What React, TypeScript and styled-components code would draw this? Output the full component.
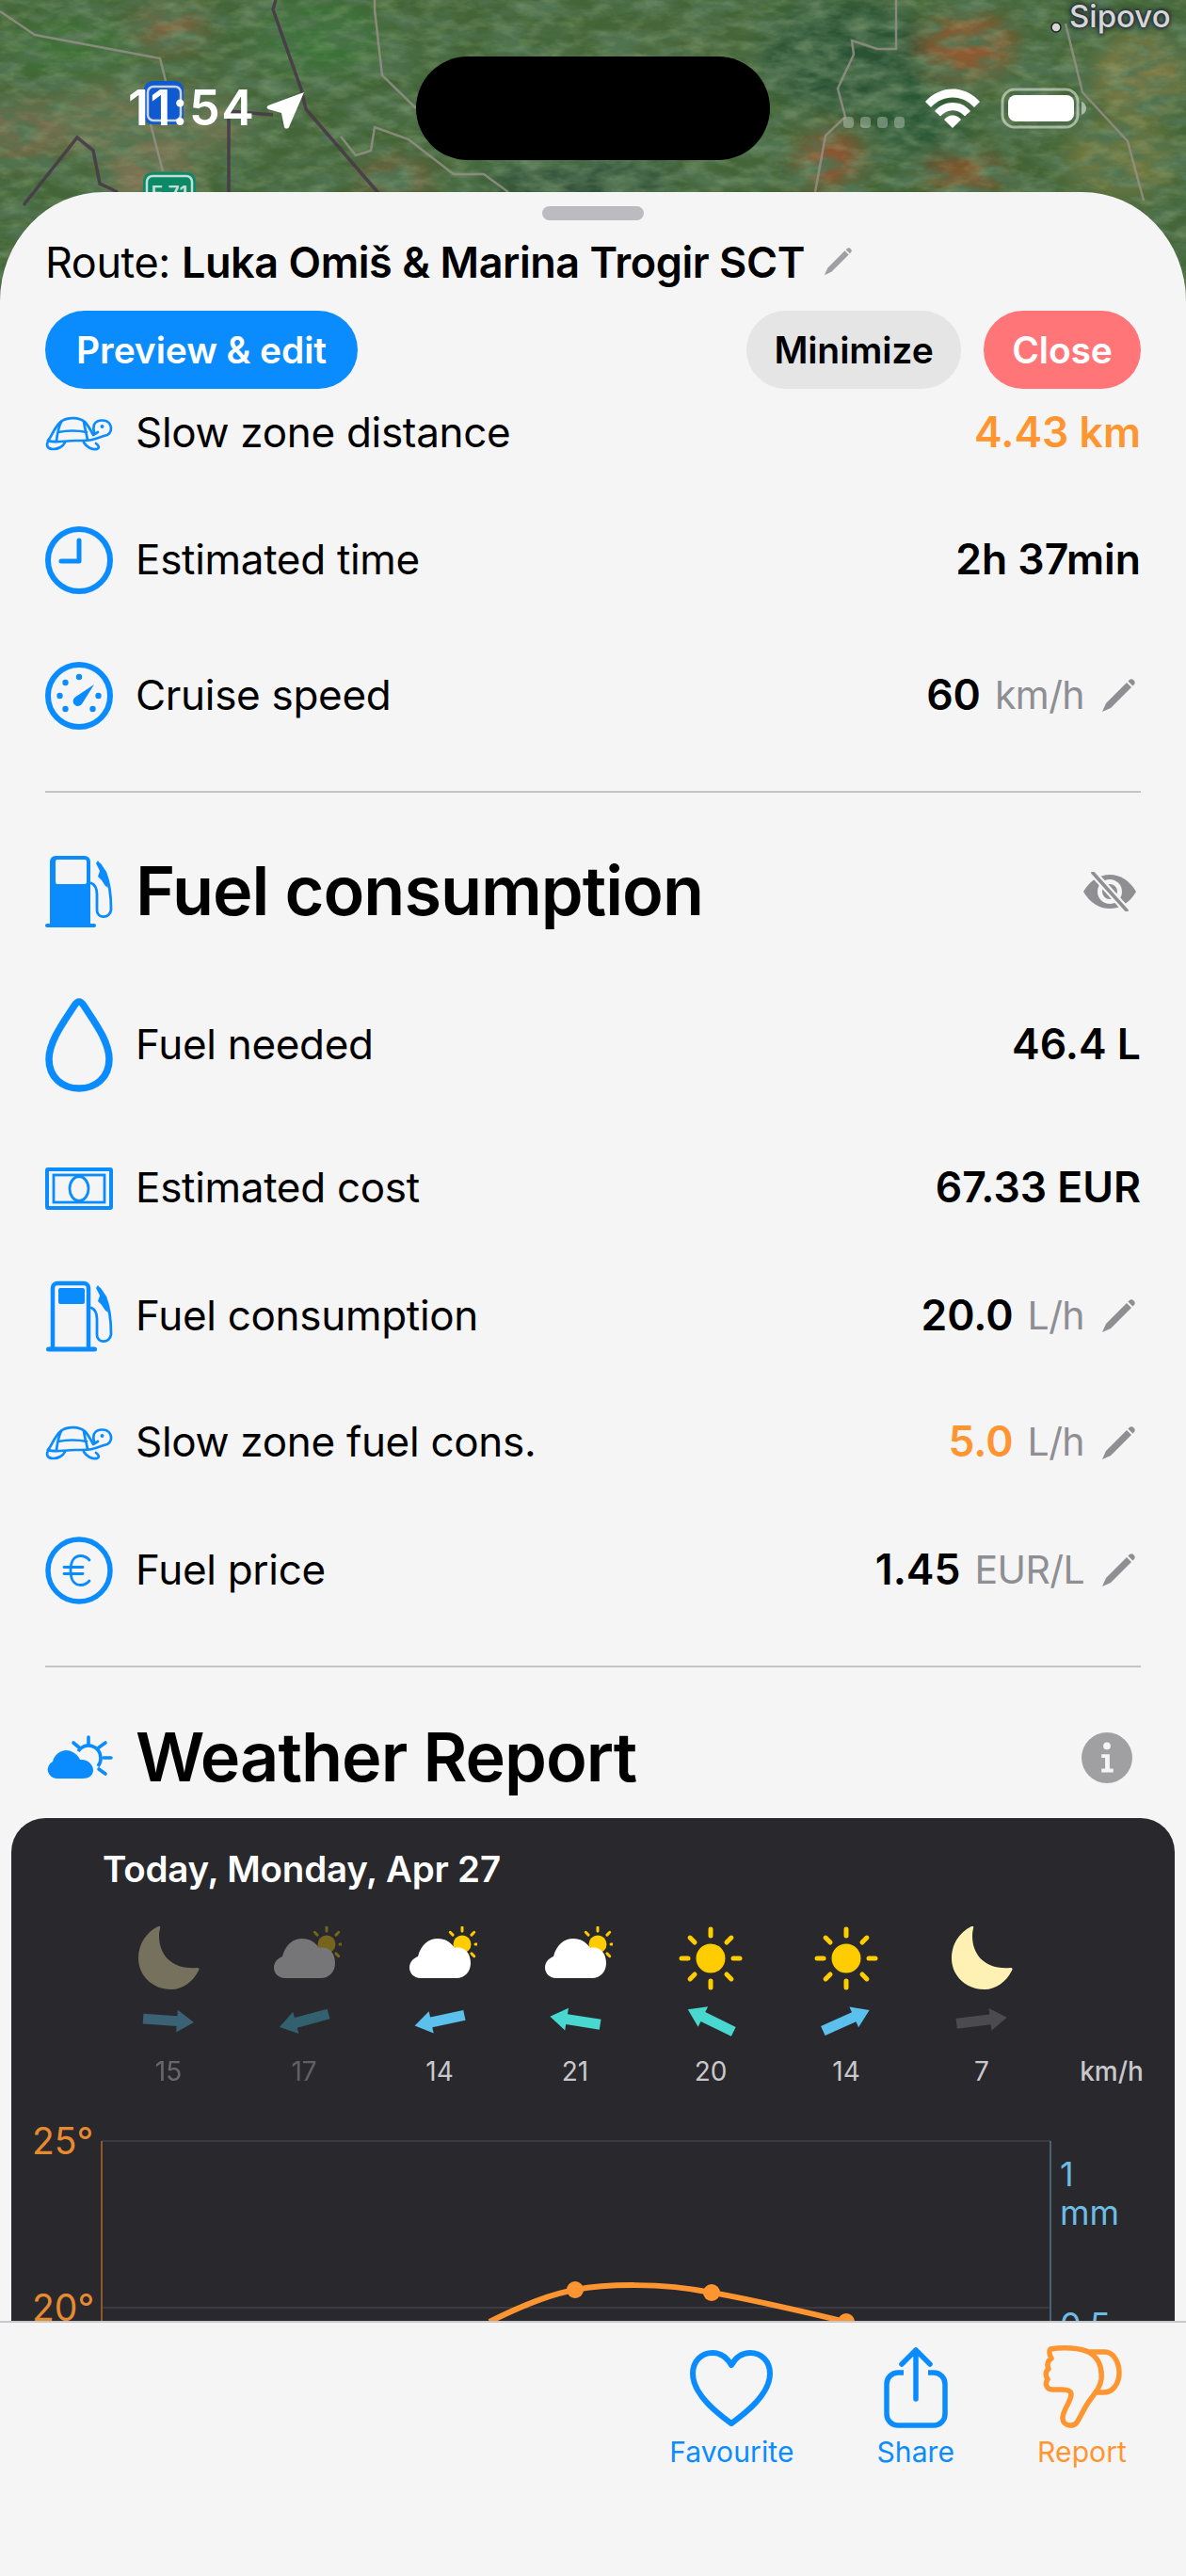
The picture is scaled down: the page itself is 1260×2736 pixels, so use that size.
import React from 'react';
import styled, { createGlobalStyle } from 'styled-components';

const BLUE = '#0a8cff';
const ORANGE = '#ff9530';
const GRAY = '#8e8e93';

const GlobalStyle = createGlobalStyle`
  html, body { margin: 0; padding: 0; background: #f5f5f5; }
  body { font-family: Inter, "Liberation Sans", sans-serif; color: #000; }
  * { box-sizing: border-box; }
`;

// ── Page shell ─────────────────────────────────────────────────────────────

const Screen = styled.div`
  position: relative;
  width: 1260px;
  height: 2736px;
  overflow: hidden;
  padding-top: 204px;
  display: flex;
  flex-direction: column;
`;

const MapLayer = styled.svg`
  position: absolute;
  left: 0;
  top: 0;
`;

const Island = styled.div`
  position: absolute;
  left: 442px;
  top: 60px;
  width: 376px;
  height: 110px;
  border-radius: 55px;
  background: #000;
`;

const StatusTime = styled.div`
  position: absolute;
  left: 136px;
  top: 85px;
  font-size: 52px;
  line-height: 60px;
  font-weight: 600;
  color: #fff;
  letter-spacing: 1.5px;
`;

const PlaceLabel = styled.div`
  position: absolute;
  left: 1136px;
  top: -2px;
  font-size: 33px;
  line-height: 38px;
  font-weight: 500;
  color: #d6d6d6;
  text-shadow: 0 0 3px #27303a, 0 0 3px #27303a, 0 0 5px #27303a, 0 0 6px #27303a;
`;

const Sheet = styled.div`
  position: relative;
  flex: 1;
  min-height: 0;
  display: flex;
  flex-direction: column;
  background: #f5f5f5;
  border-radius: 110px 110px 0 0 / 116px 116px 0 0;
`;

const Grabber = styled.div`
  position: absolute;
  left: 576px;
  top: 15px;
  width: 108px;
  height: 15px;
  border-radius: 8px;
  background: #bcbcc0;
`;

// ── Header ─────────────────────────────────────────────────────────────────

const Header = styled.div`
  height: 226px;
  flex: none;
  padding: 48px 48px 0;
`;

const TitleLine = styled.div`
  display: flex;
  align-items: center;
  gap: 20px;
  height: 52px;
  font-size: 45px;
  letter-spacing: -0.44px;
  white-space: nowrap;

  b { font-weight: 600; }
`;

const ButtonRow = styled.div`
  display: flex;
  align-items: center;
  gap: 24px;
  margin-top: 26px;
`;

const Pill = styled.div<{ $bg: string; $fg: string; $w: number }>`
  width: ${({ $w }) => $w}px;
  height: 83px;
  border-radius: 42px;
  display: flex;
  align-items: center;
  justify-content: center;
  background: ${({ $bg }) => $bg};
  color: ${({ $fg }) => $fg};
  font-size: 39px;
  font-weight: 600;
  letter-spacing: -0.1px;
  white-space: nowrap;
`;

const Spacer = styled.div`
  flex: 1;
`;

// ── Scrolled content ───────────────────────────────────────────────────────

const Scroll = styled.div`
  flex: 1;
  min-height: 0;
  overflow: hidden;
`;

const Section = styled.div`
  padding: 0 48px;
`;

const Row = styled.div<{ $h: number; $mt: number }>`
  height: ${({ $h }) => $h}px;
  margin-top: ${({ $mt }) => $mt}px;
  display: flex;
  align-items: center;
`;

const IconSlot = styled.div`
  width: 72px;
  flex: none;
  display: flex;
  align-items: center;
  justify-content: center;
  margin-right: 24px;
`;

const Label = styled.div`
  flex: 1;
  margin-bottom: 3px;
  font-size: 44px;
  letter-spacing: -0.3px;
  white-space: nowrap;
`;

const Value = styled.div<{ $warn?: boolean }>`
  margin-bottom: 3px;
  font-size: 44.5px;
  font-weight: 600;
  color: ${({ $warn }) => ($warn ? ORANGE : '#000')};
  white-space: nowrap;
`;

const Unit = styled.div`
  margin-left: 15px;
  margin-bottom: 3px;
  font-size: 41px;
  letter-spacing: -0.6px;
  color: ${GRAY};
  white-space: nowrap;
`;

const EditSlot = styled.div`
  margin-left: 18px;
  margin-right: 6px;
  display: flex;
`;

const Divider = styled.div<{ $mt: number }>`
  height: 2px;
  margin-top: ${({ $mt }) => $mt}px;
  background: #c4c4c6;
`;

const HeadingRow = styled.div<{ $h: number; $mt: number }>`
  height: ${({ $h }) => $h}px;
  margin-top: ${({ $mt }) => $mt}px;
  display: flex;
  align-items: center;
`;

const Heading = styled.div`
  flex: 1;
  margin-bottom: 3px;
  font-size: 72px;
  font-weight: 600;
  letter-spacing: -1px;
  white-space: nowrap;
`;

const HeadingTool = styled.div<{ $right: number }>`
  margin-right: ${({ $right }) => $right}px;
  display: flex;
`;

// ── Weather card ───────────────────────────────────────────────────────────

const WeatherCard = styled.div`
  margin: 25px 12px 0;
  height: 700px;
  background: #28282d;
  border-radius: 36px;
  padding-top: 30px;
`;

const DateLine = styled.div`
  padding-left: 97px;
  font-size: 38.5px;
  line-height: 48px;
  font-weight: 600;
  letter-spacing: -0.2px;
  color: #fff;
`;

const Forecast = styled.div`
  display: grid;
  grid-template-columns: repeat(7, 144px) 132px;
  padding-left: 95px;
  margin-top: 37px;
`;

const HourCell = styled.div`
  display: flex;
  flex-direction: column;
  align-items: center;
`;

const HourIcon = styled.div<{ $dim: number }>`
  height: 68px;
  display: flex;
  opacity: ${({ $dim }) => $dim};
`;

const HourArrow = styled.div`
  height: 48px;
  margin-top: 8px;
  display: flex;
`;

const Speed = styled.div<{ $dim: number }>`
  margin-top: 12px;
  height: 36px;
  font-size: 28px;
  line-height: 36px;
  color: #c8c8cc;
  opacity: ${({ $dim }) => $dim};
`;

const SpeedUnit = styled(Speed)`
  grid-column: 8;
  align-self: end;
  justify-self: center;
  font-weight: 500;
`;

const ChartSvg = styled.svg`
  display: block;
  margin-top: 22px;
`;

// ── Footer ─────────────────────────────────────────────────────────────────

const Footer = styled.div`
  flex: none;
  height: 271px;
  background: #f5f5f5;
  border-top: 2px solid #c8c8ca;
  display: flex;
  justify-content: flex-end;
  gap: 88px;
  padding: 24px 63px 0 0;
`;

const FooterAction = styled.div<{ $color: string }>`
  display: flex;
  flex-direction: column;
  align-items: center;
  color: ${({ $color }) => $color};
  font-size: 30px;
  line-height: 38px;
  letter-spacing: 0.1px;
`;

const ActionIcon = styled.div`
  height: 88px;
  display: flex;
  align-items: flex-end;
  margin-bottom: 6px;
`;

// ── Icons ──────────────────────────────────────────────────────────────────

const Pencil = ({ size = 36, color = GRAY }: { size?: number; color?: string }) => (
  <svg width={size} height={size} viewBox="0 0 36 36">
    <path d="M27 4 L32 9 L10 31 L1 35 L5 26 Z" fill={color} />
    <path d="M29.500 1.500 a2.600 2.600 0 0 1 5 5 L33.400 7.600 L28.400 2.600 Z" fill={color} />
  </svg>
);

const ClockIcon = () => (
  <svg width="72" height="72" viewBox="0 0 72 72" fill="none" stroke={BLUE} strokeWidth="6" strokeLinecap="round" strokeLinejoin="round">
    <circle cx="36" cy="36" r="33" />
    <path d="M36 15 V37 H17" strokeWidth="5" />
  </svg>
);

const GaugeIcon = () => (
  <svg width="72" height="72" viewBox="0 0 72 72" fill="none">
    <circle cx="36" cy="36" r="33" stroke={BLUE} strokeWidth="6" />
    {[[36, 16], [21.5, 22], [15.5, 36], [21.5, 50], [56.5, 36], [50.5, 50]].map(([x, y]) => (
      <circle key={`${x}-${y}`} cx={x} cy={y} r="3.2" fill={BLUE} />
    ))}
    <path d="M52 24 L39.500 44 a5.200 5.200 0 1 1 -7.800 -6.400 Z" fill={BLUE} />
  </svg>
);

const PumpIcon = ({ solid }: { solid?: boolean }) => (
  <svg width="72" height="76" viewBox="0 0 72 76" fill="none">
    {solid ? (
      <>
        <path
          fillRule="evenodd"
          d="M5 73 V6 a6 6 0 0 1 6 -6 H42 a6 6 0 0 1 6 6 V73 Z M13 4 a2 2 0 0 0 -2 2 V28 a2 2 0 0 0 2 2 H42 a2 2 0 0 0 2 -2 V6 a2 2 0 0 0 -2 -2 Z"
          fill={BLUE}
        />
        <rect x="0" y="72" width="54" height="4" rx="2" fill={BLUE} />
      </>
    ) : (
      <>
        <path d="M8 73 V8 a5 5 0 0 1 5 -5 H41 a5 5 0 0 1 5 5 V73" stroke={BLUE} strokeWidth="4.500" />
        <rect x="1" y="70.500" width="54" height="5" rx="2.500" fill={BLUE} />
        <rect x="14" y="8" width="28" height="17" rx="2" fill={BLUE} />
      </>
    )}
    <path d="M49 29 C54 31 55 35 55 41 V58 C55 67 69 67 70 57 C70 45 68 28 64 18 L58 9" stroke={BLUE} strokeWidth="2.800" strokeLinecap="round" />
    <path d="M56 5 L61 12 C64 18 66 25 67 34 L64 32 L60 26 L56 22 L58 16 L54 8 Z" fill={BLUE} />
  </svg>
);

const DropIcon = () => (
  <svg width="72" height="102" viewBox="0 0 72 102" fill="none">
    <path
      d="M36 5 C38 5 39 6 41 9 C52 26 68 47 68 66 C68 85 54 97 36 97 C18 97 4 85 4 66 C4 47 20 26 31 9 C33 6 34 5 36 5 Z"
      stroke={BLUE}
      strokeWidth="7.500"
      strokeLinejoin="round"
    />
  </svg>
);

const MoneyIcon = () => (
  <svg width="72" height="45" viewBox="0 0 72 45" fill="none">
    <rect x="2" y="2" width="68" height="41" rx="1" stroke={BLUE} strokeWidth="4" />
    <rect x="9" y="8" width="54" height="29" stroke={BLUE} strokeWidth="2.800" fill="none" />
    <ellipse cx="36" cy="22.500" rx="10" ry="13" stroke={BLUE} strokeWidth="2.800" />
  </svg>
);

const TurtleIcon = () => (
  <svg width="72" height="37" viewBox="0 0 72 37" fill="none" stroke={BLUE} strokeWidth="2.700" strokeLinecap="round" strokeLinejoin="round">
    <path d="M3 26 C7 22 10 10 18 5 C24 1 36 1 42 6 C46 10 48 14 51 20 L56 17" />
    <path d="M3 26 C10 29 20 26 32 26 C40 26 46 26 50 25 C58 23 61 21 66 20 C70 18 71 13 69 9 C66 3 55 3 52 9 C51 12 51 14 52 17" />
    <path d="M17 6 C14 12 13 18 12 26 M41 6 C42 13 44 19 45 25 M14 17 C24 15 34 15 44 17" />
    <path d="M3 27 C1 31 2 35 9 35 C14 35 19 32 21 28 M41 28 C44 33 50 36 55 35 C58 34 57 31 54 29" />
    <circle cx="60.500" cy="11" r="2" fill={BLUE} stroke="none" />
  </svg>
);

const EuroIcon = () => (
  <svg width="72" height="72" viewBox="0 0 72 72" fill="none" stroke={BLUE} strokeLinecap="round">
    <circle cx="36" cy="36" r="33" strokeWidth="5.500" />
    <path d="M47 25 C44 21.500 41 20.500 37.500 20.500 C31 20.500 27 26 27 36 C27 46 31 51.500 37.500 51.500 C41 51.500 44 50.500 47 47" strokeWidth="2.800" />
    <path d="M20 32.500 H40 M20 39.500 H40" strokeWidth="2.800" />
  </svg>
);

const EyeOffIcon = () => (
  <svg width="58" height="42" viewBox="0 0 58 42" fill="none">
    <path d="M1 21 C8 9 18 3 29 3 C40 3 50 9 57 21 C50 33 40 39 29 39 C18 39 8 33 1 21 Z" fill={GRAY} />
    <circle cx="29" cy="21" r="10.500" fill="none" stroke="#f5f5f5" strokeWidth="5" />
    <path d="M12 2 L47 41" stroke="#f5f5f5" strokeWidth="8" />
    <path d="M11 1 L47 41" stroke={GRAY} strokeWidth="3.600" strokeLinecap="round" />
  </svg>
);

const InfoIcon = () => (
  <svg width="54" height="54" viewBox="0 0 56 56">
    <circle cx="28" cy="28" r="28" fill="#a0a0a3" />
    <circle cx="28" cy="15" r="4" fill="#f5f5f5" />
    <path d="M22 24 H31 V40 H35 V44 H22 V40 H26 V28 H22 Z" fill="#f5f5f5" />
  </svg>
);

const WeatherHeadIcon = () => (
  <svg width="72" height="48" viewBox="0 0 72 48" fill="none">
    <g stroke={BLUE} strokeWidth="3.600" strokeLinecap="round">
      <path d="M46 2 V9 M30 8 L36 13 M64 8 L57 13 M70 24 H62 M64 41 L57 36" />
    </g>
    <path d="M35 17 a13 13 0 0 1 24 7 a13 13 0 0 1 -3 9" stroke={BLUE} strokeWidth="3.600" fill="none" />
    <path d="M12 46 a9.500 9.500 0 0 1 -4 -18 C10 18 22 12 31 19 C34 21 36 23 37 26 C45 25 51 31 51 37 C51 43 46 46 40 46 Z" fill={BLUE} />
  </svg>
);

const Moon = () => (
  <svg width="66" height="68" viewBox="0 0 66 68">
    <path d="M24 0 C25 1 23 4 23 10 C23 30 36 46 63 44 C66 44 66 45 65 47 C59 59 48 67 36 67 C16 67 1 52 1 34 C1 18 10 6 22 0 Z" fill="#fff1b3" />
  </svg>
);

const sunRays = (cx: number, cy: number, r1: number, r2: number) =>
  [0, 45, 90, 135, 180, 225, 270, 315].map(a => {
    const t = (a * Math.PI) / 180;
    return (
      <line
        key={a}
        x1={cx + r1 * Math.cos(t)}
        y1={cy + r1 * Math.sin(t)}
        x2={cx + r2 * Math.cos(t)}
        y2={cy + r2 * Math.sin(t)}
      />
    );
  });

const Sun = () => (
  <svg width="68" height="68" viewBox="0 0 68 68">
    <circle cx="34" cy="34" r="15.500" fill="#ffcc00" />
    <g stroke="#ffcc00" strokeWidth="5" strokeLinecap="round">{sunRays(34, 34, 24, 31)}</g>
  </svg>
);

const CloudSun = () => (
  <svg width="80" height="68" viewBox="-8 0 80 68">
    <circle cx="56" cy="19" r="9.500" fill="#ffcc00" />
    <g stroke="#ffcc00" strokeWidth="3" strokeLinecap="round">{sunRays(56, 19, 14, 18)}</g>
    <path transform="translate(0 -3)" d="M12 58 C4 58 0 52 0 47 C0 41 4 37 9 35 C12 23 20 16 30 16 C38 16 44 20 48 26 C57 24 65 30 65 42 C65 52 58 58 50 58 Z" fill="#fff" />
  </svg>
);

const WindArrow = ({ angle, color }: { angle: number; color: string }) => (
  <svg width="70" height="48" viewBox="-35 -24 70 48">
    <g transform={`rotate(${angle})`}>
      <path d="M-27 -5.500 H9 V-12 L27 0 L9 12 V5.500 H-27 Z" fill={color} />
    </g>
  </svg>
);

const LocationArrow = styled.svg`
  position: absolute;
  left: 283px;
  top: 96px;
`;

const WifiIcon = styled.svg`
  position: absolute;
  left: 983px;
  top: 94px;
`;

const BatteryIcon = styled.svg`
  position: absolute;
  left: 1063px;
  top: 93px;
`;

const CellDots = styled.svg`
  position: absolute;
  left: 894px;
  top: 123px;
`;

// ── Map backdrop ───────────────────────────────────────────────────────────

const MapBackdrop = () => (
  <MapLayer width="1260" height="340" viewBox="0 0 1260 340">
    <defs>
      <filter id="soft" x="-30%" y="-30%" width="160%" height="160%">
        <feGaussianBlur stdDeviation="13" />
      </filter>
      <filter id="grain" x="0" y="0" width="100%" height="100%">
        <feTurbulence type="fractalNoise" baseFrequency="0.04 0.09" numOctaves="4" seed="7" />
        <feColorMatrix values="0 0 0 0 0.5  0 0 0 0 0.62  0 0 0 0 0.34  1.8 0 0 0 -0.75" />
      </filter>
      <filter id="shade" x="0" y="0" width="100%" height="100%">
        <feTurbulence type="fractalNoise" baseFrequency="0.025 0.06" numOctaves="4" seed="21" />
        <feColorMatrix values="0 0 0 0 0.08  0 0 0 0 0.17  0 0 0 0 0.08  0 2.6 0 0 -0.9" />
      </filter>
    </defs>
    <rect width="1260" height="340" fill="#436537" />
    <g filter="url(#soft)">
      <ellipse cx="150" cy="130" rx="120" ry="40" fill="#6e7350" />
      <ellipse cx="180" cy="30" rx="40" ry="24" fill="#7d6440" />
      <ellipse cx="20" cy="140" rx="40" ry="34" fill="#7a6a48" />
      <ellipse cx="160" cy="190" rx="50" ry="26" fill="#7e7352" />
      <ellipse cx="80" cy="50" rx="70" ry="30" fill="#3f7138" />
      <ellipse cx="340" cy="40" rx="70" ry="40" fill="#3b7238" />
      <ellipse cx="420" cy="190" rx="40" ry="24" fill="#6e6240" />
      <ellipse cx="620" cy="190" rx="100" ry="30" fill="#33533a" />
      <ellipse cx="900" cy="60" rx="90" ry="60" fill="#2a5234" />
      <ellipse cx="1030" cy="50" rx="50" ry="34" fill="#8d5a30" />
      <ellipse cx="880" cy="170" rx="36" ry="30" fill="#8f5430" />
      <ellipse cx="1025" cy="185" rx="44" ry="20" fill="#85552e" />
      <ellipse cx="975" cy="130" rx="55" ry="45" fill="#2b5836" />
      <ellipse cx="1210" cy="80" rx="50" ry="44" fill="#7d7a44" />
      <ellipse cx="1190" cy="170" rx="60" ry="40" fill="#6f7840" />
      <ellipse cx="720" cy="60" rx="70" ry="40" fill="#49683a" />
    </g>
    <rect width="1260" height="340" filter="url(#shade)" />
    <rect width="1260" height="340" filter="url(#grain)" opacity="0.32" />
    <g fill="none" stroke="#948f85" strokeWidth="2.500" opacity="0.85">
      <path d="M0 12 L37 37 L170 62 L176 86 M160 132 L173 182" />
      <path d="M398 0 V10 L406 80 L442 115 M362 145 L378 165 L394 160 L398 135 L434 148 L482 185 L514 185 L540 204" />
      <path d="M952 0 V52 H932 L905 43 L907 58 L890 94 L898 124 L877 144 L866 204" />
      <path d="M1132 25 L1150 98 L1198 150 L1215 213" />
    </g>
    <g fill="none" stroke="#4a3a48" strokeWidth="3.500" opacity="0.9">
      <path d="M293 0 L290 10 L320 95 L325 116 L402 205" />
      <path d="M243 125 V204 M243 118 L290 122" />
      <path d="M25 218 L82 146 L99 160 L106 195 L125 204" />
    </g>
    <rect x="153" y="86" width="42" height="46" rx="9" fill="#0f5ad0" />
    <rect x="157" y="92" width="35" height="36" rx="6" fill="none" stroke="#c9d3e4" strokeWidth="2.500" />
    <rect x="152" y="183" width="56" height="44" rx="9" fill="#0b8a68" />
    <rect x="156" y="187" width="48" height="36" rx="6" fill="none" stroke="#c6dcd4" strokeWidth="2.500" />
    <text x="180" y="213" textAnchor="middle" fontFamily="Inter, sans-serif" fontSize="21" fontWeight="600" fill="#c6dcd4">E 71</text>
    <circle cx="1122" cy="29" r="5" fill="#d6d6d6" stroke="#222" strokeWidth="1.500" />
  </MapLayer>
);

// ── Data ───────────────────────────────────────────────────────────────────

type Sky = 'moon' | 'cloud' | 'sun';

interface Hour {
  sky: Sky;
  dim: number;
  angle: number;
  color: string;
  speed: number;
  speedDim: number;
}

const HOURS: Hour[] = [
  { sky: 'moon', dim: 0.36, angle: 4, color: '#3a6274', speed: 15, speedDim: 0.4 },
  { sky: 'cloud', dim: 0.36, angle: 165, color: '#33606f', speed: 17, speedDim: 0.35 },
  { sky: 'cloud', dim: 1, angle: 168, color: '#5cc0ec', speed: 14, speedDim: 1 },
  { sky: 'cloud', dim: 1, angle: 189, color: '#48d8d0', speed: 21, speedDim: 1 },
  { sky: 'sun', dim: 1, angle: 206, color: '#48d8d0', speed: 20, speedDim: 1 },
  { sky: 'sun', dim: 1, angle: -24, color: '#5cc0ec', speed: 14, speedDim: 1 },
  { sky: 'moon', dim: 1, angle: -7, color: '#4a4a4f', speed: 7, speedDim: 1 },
];

const SkyIcon = ({ sky }: { sky: Sky }) => {
  if (sky === 'moon') return <Moon />;
  if (sky === 'sun') return <Sun />;
  return <CloudSun />;
};

// ── Page ───────────────────────────────────────────────────────────────────

const App: React.FC = () => (
  <Screen>
    <GlobalStyle />
    <MapBackdrop />
    <Island />
    <StatusTime>11:54</StatusTime>
    <LocationArrow width="42" height="42" viewBox="0 0 42 42">
      <path d="M40 2 L24 39 C23 41 20 41 19 39 L16 24 L2 20 C0 19 0 17 2 16 Z" fill="#fff" />
    </LocationArrow>
    <CellDots width="68" height="14" viewBox="0 0 68 14">
      {[0, 18, 36, 54].map(x => (
        <rect key={x} x={x + 2} y="1" width="11" height="12" rx="4" fill="#fff" opacity="0.3" />
      ))}
    </CellDots>
    <WifiIcon width="58" height="42" viewBox="0 0 58 42">
      <path d="M0 14 C16 -4 42 -4 58 14 L52 20 C39 6 19 6 6 20 Z" fill="#fff" />
      <path d="M10 24 C20 12 38 12 48 24 L42 29.500 C34 21 24 21 16 29.500 Z" fill="#fff" />
      <path d="M20 33 C25 27 33 27 38 33 L29 42 Z" fill="#fff" />
    </WifiIcon>
    <BatteryIcon width="92" height="44" viewBox="0 0 92 44">
      <rect x="2" y="2" width="80" height="40" rx="13" fill="none" stroke="#fff" strokeOpacity="0.5" strokeWidth="3" />
      <rect x="8" y="8" width="70" height="28" rx="8" fill="#fff" />
      <path d="M86 15 c3 1 5 4 5 7 s-2 6 -5 7 Z" fill="#fff" fillOpacity="0.5" />
    </BatteryIcon>
    <PlaceLabel>Sipovo</PlaceLabel>

    <Sheet>
      <Grabber />
      <Header>
        <TitleLine>
          <span>
            Route: <b>Luka Omiš &amp; Marina Trogir SCT</b>
          </span>
          <Pencil size={30} color="#a0a0a4" />
        </TitleLine>
        <ButtonRow>
          <Pill $bg={BLUE} $fg="#fff" $w={332}>Preview &amp; edit</Pill>
          <Spacer />
          <Pill $bg="#e5e5e5" $fg="#000" $w={228}>Minimize</Pill>
          <Pill $bg="#ff7578" $fg="#fff" $w={167}>Close</Pill>
        </ButtonRow>
      </Header>

      <Scroll>
        <Section>
          <Row $h={60} $mt={0}>
            <IconSlot><TurtleIcon /></IconSlot>
            <Label>Slow zone distance</Label>
            <Value $warn>4.43 km</Value>
          </Row>
          <Row $h={72} $mt={69}>
            <IconSlot><ClockIcon /></IconSlot>
            <Label>Estimated time</Label>
            <Value>2h 37min</Value>
          </Row>
          <Row $h={72} $mt={72}>
            <IconSlot><GaugeIcon /></IconSlot>
            <Label>Cruise speed</Label>
            <Value>60</Value>
            <Unit>km/h</Unit>
            <EditSlot><Pencil /></EditSlot>
          </Row>
          <Divider $mt={65} />
          <HeadingRow $h={78} $mt={66}>
            <IconSlot><PumpIcon solid /></IconSlot>
            <Heading>Fuel consumption</Heading>
            <HeadingTool $right={4}><EyeOffIcon /></HeadingTool>
          </HeadingRow>
          <Row $h={102} $mt={73}>
            <IconSlot><DropIcon /></IconSlot>
            <Label>Fuel needed</Label>
            <Value>46.4 L</Value>
          </Row>
          <Row $h={45} $mt={79}>
            <IconSlot><MoneyIcon /></IconSlot>
            <Label>Estimated cost</Label>
            <Value>67.33 EUR</Value>
          </Row>
          <Row $h={76} $mt={75}>
            <IconSlot><PumpIcon /></IconSlot>
            <Label>Fuel consumption</Label>
            <Value>20.0</Value>
            <Unit>L/h</Unit>
            <EditSlot><Pencil /></EditSlot>
          </Row>
          <Row $h={37} $mt={78}>
            <IconSlot><TurtleIcon /></IconSlot>
            <Label>Slow zone fuel cons.</Label>
            <Value $warn>5.0</Value>
            <Unit>L/h</Unit>
            <EditSlot><Pencil /></EditSlot>
          </Row>
          <Row $h={72} $mt={81}>
            <IconSlot><EuroIcon /></IconSlot>
            <Label>Fuel price</Label>
            <Value>1.45</Value>
            <Unit>EUR/L</Unit>
            <EditSlot><Pencil /></EditSlot>
          </Row>
          <Divider $mt={65} />
          <HeadingRow $h={78} $mt={57}>
            <IconSlot><WeatherHeadIcon /></IconSlot>
            <Heading>Weather Report</Heading>
            <HeadingTool $right={9}><InfoIcon /></HeadingTool>
          </HeadingRow>
        </Section>

        <WeatherCard>
          <DateLine>Today, Monday, Apr 27</DateLine>
          <Forecast>
            {HOURS.map((h, i) => (
              <HourCell key={i}>
                <HourIcon $dim={h.dim}><SkyIcon sky={h.sky} /></HourIcon>
                <HourArrow><WindArrow angle={h.angle} color={h.color} /></HourArrow>
                <Speed $dim={h.speedDim}>{h.speed}</Speed>
              </HourCell>
            ))}
            <SpeedUnit $dim={1}>km/h</SpeedUnit>
          </Forecast>
          <ChartSvg width="1236" height="320" viewBox="0 0 1236 320">
            <g stroke="#3a3a40" strokeWidth="2">
              <line x1="96" y1="34" x2="1104" y2="34" />
              <line x1="96" y1="211" x2="1104" y2="211" />
            </g>
            <line x1="96" y1="34" x2="96" y2="320" stroke="#8a5a2a" strokeWidth="2" />
            <line x1="1104" y1="34" x2="1104" y2="320" stroke="#4a6274" strokeWidth="2" />
            <g fontFamily="Inter, sans-serif" fontSize="39" fill="#e88a30">
              <text x="22" y="48">25°</text>
              <text x="22" y="225">20°</text>
            </g>
            <g fontFamily="Inter, sans-serif" fontSize="36" fill="#6cbce4">
              <text x="1114" y="82">1</text>
              <text x="1114" y="123">mm</text>
              <text x="1114" y="242">0.5</text>
            </g>
            <path
              d="M508 226 C540 210 570 197 599 192 C630 186 690 184 744 195 C790 203 840 215 887 226 C910 232 930 240 950 248"
              fill="none"
              stroke={ORANGE}
              strokeWidth="6"
            />
            {[[599, 192], [744, 195], [887, 226]].map(([x, y]) => (
              <circle key={x} cx={x} cy={y} r="9" fill={ORANGE} />
            ))}
          </ChartSvg>
        </WeatherCard>
      </Scroll>

      <Footer>
        <FooterAction $color={BLUE}>
          <ActionIcon>
            <svg width="90" height="84" viewBox="0 0 90 84" fill="none">
              <path
                d="M45 79 C30 68 4 48 4 26 C4 13 13 4 25 4 C33 4 40 8 45 17 C50 8 57 4 65 4 C77 4 86 13 86 26 C86 48 60 68 45 79 Z"
                stroke={BLUE}
                strokeWidth="6"
                strokeLinejoin="round"
              />
            </svg>
          </ActionIcon>
          Favourite
        </FooterAction>
        <FooterAction $color={BLUE}>
          <ActionIcon>
            <svg width="68" height="86" viewBox="0 0 68 86" fill="none" stroke={BLUE} strokeWidth="5.500" strokeLinecap="round" strokeLinejoin="round">
              <path d="M21 27 H15 a12 12 0 0 0 -12 12 V71 a12 12 0 0 0 12 12 H53 a12 12 0 0 0 12 -12 V39 a12 12 0 0 0 -12 -12 H47" strokeLinecap="butt" />
              <path d="M34 55 V3 M19 18 L34 3 L49 18" />
            </svg>
          </ActionIcon>
          Share
        </FooterAction>
        <FooterAction $color={ORANGE}>
          <ActionIcon>
            <svg width="84" height="88" viewBox="0 0 84 88" fill="none" stroke={ORANGE} strokeWidth="5.500" strokeLinejoin="round" strokeLinecap="round">
              <path d="M8 4 C20 2 40 2 50 8 C60 14 63 24 62 36 C61 44 56 50 50 58 C44 66 40 76 36 82 C32 87 22 86 21 78 C20 70 30 60 30 52 C30 48 26 47 20 47 H10 C3 47 2 40 5 36 C2 32 3 27 6 25 C4 21 5 16 9 14 C7 10 6 6 8 4 Z" />
              <path d="M50 7 H66 C74 7 81 17 81 29 C81 41 74 50 65 50 H56" />
            </svg>
          </ActionIcon>
          Report
        </FooterAction>
      </Footer>
    </Sheet>
  </Screen>
);

export default App;
